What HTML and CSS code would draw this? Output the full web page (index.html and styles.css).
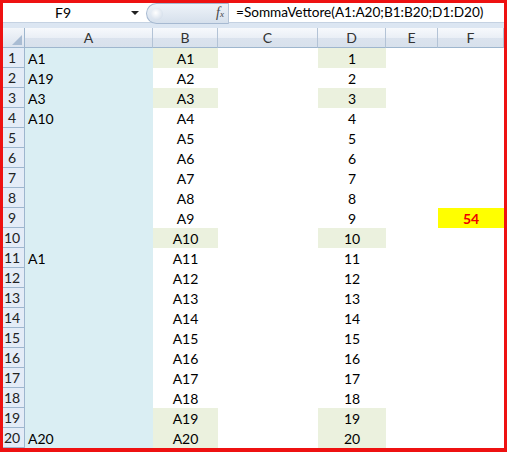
FILE: index.html
```html
<!DOCTYPE html>
<html>
<head>
<meta charset="utf-8">
<link rel="stylesheet" href="styles.css">
</head>
<body>
<div class="frame">
  <div class="fbar">
    <div class="namebox"><span class="name">F9</span><span class="arrow"></span></div>
    <div class="pill"><span class="knob"></span><span class="fx">f<sub>x</sub></span></div>
    <div class="formula">=SommaVettore(A1:A20;B1:B20;D1:D20)</div>
  </div>
  <div class="gap"></div>
  <div class="sheet">
    <div class="corner"><svg width="10" height="10" viewBox="0 0 10 10"><polygon points="10,0 10,10 0,10" fill="#a9bcd3"/></svg></div>
    <div class="ch">A</div><div class="ch">B</div><div class="ch">C</div><div class="ch">D</div><div class="ch">E</div><div class="ch last">F</div>

    <div class="rh">1</div><div class="c a">A1</div><div class="c m g">A1</div><div class="c"></div><div class="c m g">1</div><div class="c"></div><div class="c"></div>
    <div class="rh">2</div><div class="c a">A19</div><div class="c m">A2</div><div class="c"></div><div class="c m">2</div><div class="c"></div><div class="c"></div>
    <div class="rh">3</div><div class="c a">A3</div><div class="c m g">A3</div><div class="c"></div><div class="c m g">3</div><div class="c"></div><div class="c"></div>
    <div class="rh">4</div><div class="c a">A10</div><div class="c m">A4</div><div class="c"></div><div class="c m">4</div><div class="c"></div><div class="c"></div>
    <div class="rh">5</div><div class="c a"></div><div class="c m">A5</div><div class="c"></div><div class="c m">5</div><div class="c"></div><div class="c"></div>
    <div class="rh">6</div><div class="c a"></div><div class="c m">A6</div><div class="c"></div><div class="c m">6</div><div class="c"></div><div class="c"></div>
    <div class="rh">7</div><div class="c a"></div><div class="c m">A7</div><div class="c"></div><div class="c m">7</div><div class="c"></div><div class="c"></div>
    <div class="rh">8</div><div class="c a"></div><div class="c m">A8</div><div class="c"></div><div class="c m">8</div><div class="c"></div><div class="c"></div>
    <div class="rh">9</div><div class="c a"></div><div class="c m">A9</div><div class="c"></div><div class="c m">9</div><div class="c"></div><div class="c m res">54</div>
    <div class="rh">10</div><div class="c a"></div><div class="c m g">A10</div><div class="c"></div><div class="c m g">10</div><div class="c"></div><div class="c"></div>
    <div class="rh">11</div><div class="c a">A1</div><div class="c m">A11</div><div class="c"></div><div class="c m">11</div><div class="c"></div><div class="c"></div>
    <div class="rh">12</div><div class="c a"></div><div class="c m">A12</div><div class="c"></div><div class="c m">12</div><div class="c"></div><div class="c"></div>
    <div class="rh">13</div><div class="c a"></div><div class="c m">A13</div><div class="c"></div><div class="c m">13</div><div class="c"></div><div class="c"></div>
    <div class="rh">14</div><div class="c a"></div><div class="c m">A14</div><div class="c"></div><div class="c m">14</div><div class="c"></div><div class="c"></div>
    <div class="rh">15</div><div class="c a"></div><div class="c m">A15</div><div class="c"></div><div class="c m">15</div><div class="c"></div><div class="c"></div>
    <div class="rh">16</div><div class="c a"></div><div class="c m">A16</div><div class="c"></div><div class="c m">16</div><div class="c"></div><div class="c"></div>
    <div class="rh">17</div><div class="c a"></div><div class="c m">A17</div><div class="c"></div><div class="c m">17</div><div class="c"></div><div class="c"></div>
    <div class="rh">18</div><div class="c a"></div><div class="c m">A18</div><div class="c"></div><div class="c m">18</div><div class="c"></div><div class="c"></div>
    <div class="rh">19</div><div class="c a"></div><div class="c m g">A19</div><div class="c"></div><div class="c m g">19</div><div class="c"></div><div class="c"></div>
    <div class="rh">20</div><div class="c a">A20</div><div class="c m g">A20</div><div class="c"></div><div class="c m g">20</div><div class="c"></div><div class="c"></div>
  </div>
</div>
</body>
</html>
```
FILE: styles.css
```css
html, body {
  margin: 0;
  padding: 0;
  background: #ffffff;
}
body {
  font-family: Lato, "Open Sans", sans-serif;
  font-size: 14px;
  color: #000;
}
.frame {
  width: 501px;
  height: 445px;
  border-top: 3px solid #ee1111;
  border-left: 3px solid #ee1111;
  border-right: 3px solid #ee1111;
  border-bottom: 4px solid #ee1111;
  overflow: hidden;
  background: #fff;
}
.fbar {
  height: 20px;
  display: flex;
  background: #fff;
  border-bottom: 1px solid #c5d2e2;
  box-sizing: border-box;
}
.namebox {
  width: 140px;
  display: flex;
  align-items: center;
}
.name {
  flex: 1;
  text-align: center;
  font-size: 14px;
  padding-right: 8px;
}
.arrow {
  width: 0;
  height: 0;
  border-left: 4px solid transparent;
  border-right: 4px solid transparent;
  border-top: 4px solid #222;
  margin-right: 4px;
}
.pill {
  width: 83px;
  margin-left: 3px;
  height: 21px;
  box-sizing: border-box;
  border: 1px solid #a6b9d1;
  border-right: none;
  border-radius: 11px 0 0 11px;
  background: linear-gradient(#eef3f9, #d6e0ec);
  display: flex;
  align-items: center;
  justify-content: space-between;
  padding: 0 4px 0 4px;
}
.knob {
  width: 12px;
  height: 12px;
  border-radius: 50%;
  background: radial-gradient(circle at 40% 40%, #ffffff, #c8d5e5);
}
.fx {
  font-family: "Liberation Serif", serif;
  font-style: italic;
  font-size: 14px;
  color: #444;
  border-right: 1px solid #b4c4d8;
  padding-right: 4px;
  margin-right: -4px;
  line-height: 19px;
}
.fx sub {
  font-size: 9px;
  vertical-align: baseline;
}
.formula {
  flex: 1;
  padding-left: 7px;
  line-height: 19px;
  font-size: 13.6px;
  white-space: nowrap;
}
.gap {
  height: 5px;
  background: #dce6f2;
}
.sheet {
  display: grid;
  grid-template-columns: 22px 128px 65px 100px 68px 52px 66px;
  grid-auto-rows: 20px;
}
.corner {
  background: linear-gradient(#f3f6fa, #dbe3ee);
  border-right: 1px solid #9eb6ce;
  border-bottom: 1px solid #9eb6ce;
  box-sizing: border-box;
  display: flex;
  align-items: flex-end;
  justify-content: flex-end;
  padding: 0 2px 2px 0;
}
.ch {
  background: linear-gradient(#f7f9fc 0%, #eaeff6 50%, #dbe3ee 51%, #d8e1ec 100%);
  border-right: 1px solid #b3c3d6;
  border-bottom: 1px solid #9eb6ce;
  box-sizing: border-box;
  text-align: center;
  line-height: 19px;
  color: #333;
}
.rh {
  background: #e4ecf7;
  border-right: 1px solid #9eb6ce;
  border-bottom: 1px solid #9eb6ce;
  box-sizing: border-box;
  text-align: center;
  padding-right: 3px;
  line-height: 20px;
  color: #222;
}
.c {
  line-height: 21px;
  white-space: nowrap;
}
.a {
  background: #daeef3;
  padding-left: 3px;
}
.m {
  text-align: center;
}
.g {
  background: #ebf1de;
}
.res {
  background: #ffff00;
  color: #ee0000;
  font-weight: bold;
}
```
